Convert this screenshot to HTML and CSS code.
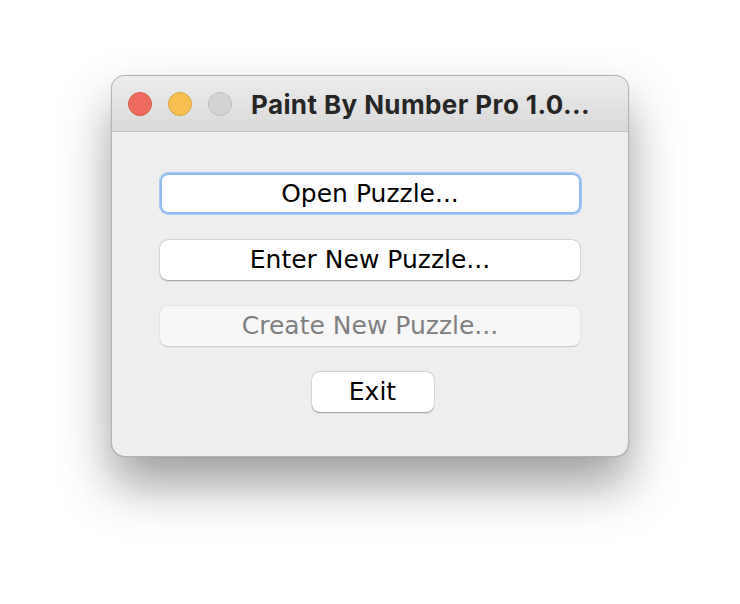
FILE: index.html
```html
<!DOCTYPE html>
<html>
<head>
<meta charset="utf-8">
<link rel="stylesheet" href="styles.css">
</head>
<body>
<div class="window">
  <div class="titlebar">
    <div class="lights">
      <span class="light red"></span>
      <span class="light yellow"></span>
      <span class="light gray"></span>
    </div>
    <div class="title">Paint By Number Pro 1.0...</div>
  </div>
  <div class="content">
    <button class="btn wide focused">Open Puzzle...</button>
    <button class="btn wide">Enter New Puzzle...</button>
    <button class="btn wide disabled">Create New Puzzle...</button>
    <button class="btn exit">Exit</button>
  </div>
</div>
</body>
</html>
```
FILE: styles.css
```css
html, body {
  margin: 0;
  padding: 0;
  background: #ffffff;
}
body {
  width: 740px;
  height: 604px;
  overflow: hidden;
}
.window {
  margin: 75px 0 0 111px;
  width: 518px;
  height: 382px;
  box-sizing: border-box;
  border: 1px solid #b4b4b4;
  border-radius: 14px;
  background: #eeeeee;
  overflow: hidden;
  box-shadow: 0 28px 50px rgba(0,0,0,0.38), 0 0 1px rgba(0,0,0,0.3);
  display: flex;
  flex-direction: column;
}
.titlebar {
  height: 55px;
  flex: none;
  background: linear-gradient(#ececec, #d9d9d9);
  border-bottom: 1px solid #c4c4c4;
  display: flex;
  align-items: center;
  padding-left: 16px;
}
.lights {
  display: flex;
  gap: 16px;
}
.light {
  width: 22px;
  height: 22px;
  border-radius: 50%;
  display: block;
}
.red { background: #ef6a5e; border: 1px solid #d8574b; }
.yellow { background: #f6bf4f; border: 1px solid #dca53b; }
.gray { background: #d4d4d4; border: 1px solid #bfbfbf; }
.title {
  margin-left: 19px;
  font-family: "Inter", "DejaVu Sans", sans-serif;
  font-weight: 700;
  font-size: 26px;
  letter-spacing: 0.4px;
  color: #262626;
  margin-top: 1px;
}
.content {
  display: flex;
  flex-direction: column;
  align-items: center;
  padding-top: 41px;
  gap: 26px;
}
.btn {
  font-family: "DejaVu Sans", sans-serif;
  font-size: 25px;
  color: #000;
  background: #fff;
  border: none;
  border-radius: 8px;
  height: 40px;
  padding: 0;
  box-shadow: 0 0.5px 1.5px rgba(0,0,0,0.35), 0 0 0 0.5px rgba(0,0,0,0.08);
  line-height: 40px;
}
.wide { width: 420px; }
.focused {
  width: 421px;
  height: 41px;
  box-shadow: 0 0 0 2px #8ebbf0 inset, 0 0 0 1px #a8cbf3;
}
.disabled {
  background: #f7f7f7;
  color: #808080;
  box-shadow: 0 0.5px 1.5px rgba(0,0,0,0.18);
}
.exit { width: 122px; margin-left: 5px; }
```
